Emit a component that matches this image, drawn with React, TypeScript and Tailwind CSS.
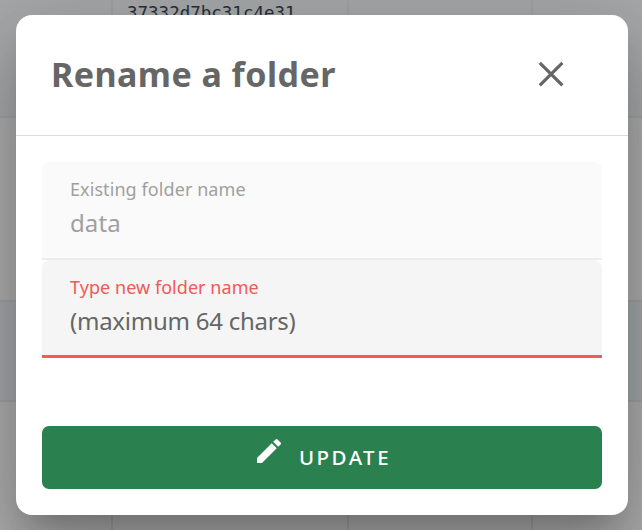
function Row({ className, hash }: { className: string; hash?: string }) {
  return (
    <div className={`grid w-full shrink-0 grid-cols-[113px_236px_184px_1fr] border-[#9fa1a3] ${className}`}>
      <div className="border-r-2 border-inherit" />
      <div className="overflow-hidden border-r-2 border-inherit pt-px pl-[14px] font-['DejaVu_Sans_Mono',monospace] text-[17.5px] leading-6 text-[#263039]">
        {hash}
      </div>
      <div className="border-r-2 border-inherit" />
      <div />
    </div>
  );
}

export default function App() {
  return (
    <div className="relative h-[530px] w-[642px] overflow-hidden bg-[#adadad] font-['Noto_Sans','Open_Sans',sans-serif]">
      <div className="flex h-full flex-col">
        <Row className="h-[118px] border-b-2 bg-[#a6a8aa]" hash="37332d7bc31c4e31" />
        <Row className="h-[184px] border-b-2 bg-[#adadad]" />
        <Row className="h-[100px] border-b-2 bg-[#a4a7aa]" />
        <Row className="h-[128px] bg-[#adadad]" />
      </div>

      <div
        role="dialog"
        className="absolute top-[15px] left-4 flex h-[500px] w-[612px] flex-col rounded-[16px] bg-white shadow-[0_22px_30px_-14px_rgba(0,0,0,0.2),0_48px_76px_6px_rgba(0,0,0,0.14),0_18px_92px_16px_rgba(0,0,0,0.12)]"
      >
        <header className="flex h-[121px] shrink-0 items-center justify-between border-b border-[#dcdcdc] pr-[59px] pl-[35px]">
          <h1 className="mt-[-2px] text-[34px] leading-[48px] font-bold tracking-[0.45px] whitespace-nowrap text-[#666]">Rename a folder</h1>
          <button aria-label="Close" className="mt-[-2px]">
            <svg className="size-9" viewBox="0 0 36 36" fill="none" stroke="#666" strokeWidth="3.2">
              <path d="M6.8 6.8L29.4 29.4M29.4 6.8L6.8 29.4" />
            </svg>
          </button>
        </header>

        <div className="px-[26px] pt-[26px]">
          <div className="h-[98px] rounded-t-[8px] border-b-2 border-[#ececec] bg-[#fafafa] pt-[15px] pl-7 text-[#a0a0a0]">
            <div className="text-[18px] leading-6 tracking-[0.08px]">Existing folder name</div>
            <div className="mt-[6px] text-[24px] leading-8 tracking-[0.1px]">data</div>
          </div>
          <div className="h-[98px] rounded-t-[8px] border-b-3 border-[#f05b56] bg-[#f5f5f5] pt-[15px] pl-7">
            <div className="text-[18px] leading-6 tracking-[0.05px] text-[#ef5a56]">Type new folder name</div>
            <div className="mt-[6px] text-[24px] leading-8 tracking-[-0.25px] text-[#666]">(maximum 64 chars)</div>
          </div>
          <button className="mt-[68px] flex h-[63px] w-full items-center justify-center rounded-[7px] bg-[#2a814f] text-white">
            <svg className="mt-[-13px] mr-[14px] size-8" viewBox="0 0 24 24" fill="currentColor">
              <path d="M3 17.25V21h3.75L17.81 9.94l-3.75-3.75L3 17.25zM20.71 7.04a1 1 0 0 0 0-1.41l-2.34-2.34a1 1 0 0 0-1.41 0l-1.83 1.83 3.75 3.75 1.83-1.83z" />
            </svg>
            <span className="mt-[-2px] text-[20.5px] leading-7 font-medium tracking-[2.5px]">UPDATE</span>
          </button>
        </div>
      </div>
    </div>
  );
}
